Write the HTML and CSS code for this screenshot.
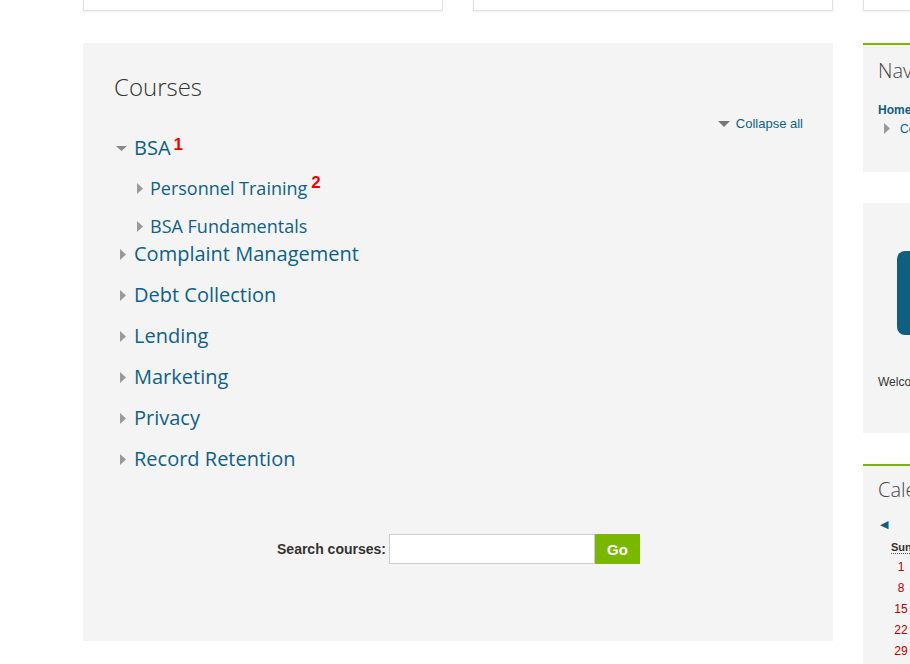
FILE: index.html
```html
<!DOCTYPE html>
<html lang="en">
<head>
  <meta charset="UTF-8" />
  <title>Courses</title>
  <link rel="stylesheet" href="styles.css">
</head>
<body>
  <div class="page">
    <div class="top-row">
      <div class="card"></div>
      <div class="card"></div>
      <div class="card"></div>
    </div>

    <div class="layout">
      <div class="main">
        <h2 class="main-title">Courses</h2>
        <div class="collapse-row">
          <a href="#" class="collapse-all">
            <svg class="tri-down-sm" width="12" height="6" viewBox="0 0 12 6"><path d="M0 0h12L6 6z" fill="#777"/></svg>
            Collapse all
          </a>
        </div>

        <div class="cat-tree">
          <div class="cat expanded">
            <div class="cat-name">
              <svg class="icon" width="20" height="28" viewBox="0 0 20 28"><path d="M2 12h11l-5.5 5z" fill="#8a8a8a"/></svg>
              <a href="#">BSA</a><span class="mark">1</span>
            </div>
            <div class="cat-children">
              <div class="subcat">
                <svg class="icon" width="16" height="28" viewBox="0 0 16 28"><path d="M3 9v11l6-5.5z" fill="#9a9a9a"/></svg>
                <a href="#">Personnel Training</a><span class="mark">2</span>
              </div>
              <div class="subcat">
                <svg class="icon" width="16" height="28" viewBox="0 0 16 28"><path d="M3 9v11l6-5.5z" fill="#9a9a9a"/></svg>
                <a href="#">BSA Fundamentals</a>
              </div>
            </div>
          </div>
          <div class="cat">
            <div class="cat-name">
              <svg class="icon" width="20" height="28" viewBox="0 0 20 28"><path d="M6 9v11l6-5.5z" fill="#9a9a9a"/></svg>
              <a href="#">Complaint Management</a>
            </div>
          </div>
          <div class="cat">
            <div class="cat-name">
              <svg class="icon" width="20" height="28" viewBox="0 0 20 28"><path d="M6 9v11l6-5.5z" fill="#9a9a9a"/></svg>
              <a href="#">Debt Collection</a>
            </div>
          </div>
          <div class="cat">
            <div class="cat-name">
              <svg class="icon" width="20" height="28" viewBox="0 0 20 28"><path d="M6 9v11l6-5.5z" fill="#9a9a9a"/></svg>
              <a href="#">Lending</a>
            </div>
          </div>
          <div class="cat">
            <div class="cat-name">
              <svg class="icon" width="20" height="28" viewBox="0 0 20 28"><path d="M6 9v11l6-5.5z" fill="#9a9a9a"/></svg>
              <a href="#">Marketing</a>
            </div>
          </div>
          <div class="cat">
            <div class="cat-name">
              <svg class="icon" width="20" height="28" viewBox="0 0 20 28"><path d="M6 9v11l6-5.5z" fill="#9a9a9a"/></svg>
              <a href="#">Privacy</a>
            </div>
          </div>
          <div class="cat">
            <div class="cat-name">
              <svg class="icon" width="20" height="28" viewBox="0 0 20 28"><path d="M6 9v11l6-5.5z" fill="#9a9a9a"/></svg>
              <a href="#">Record Retention</a>
            </div>
          </div>
        </div>

        <form class="search-form" onsubmit="return false">
          <label for="shortsearchbox">Search courses:</label>
          <input type="text" id="shortsearchbox" />
          <button type="submit">Go</button>
        </form>
      </div>

      <div class="side">
        <div class="block block-green nav-block">
          <h3 class="block-title">Navigation</h3>
          <div class="nav-home"><a href="#">Home</a></div>
          <div class="nav-item">
            <svg width="8" height="12" viewBox="0 0 8 12"><path d="M1 0v11l6-5.5z" fill="#9a9a9a"/></svg>
            <a href="#">Courses</a>
          </div>
        </div>

        <div class="block welcome-block">
          <div class="welcome-img"></div>
          <p class="welcome-text">Welcome</p>
        </div>

        <div class="block block-green cal-block">
          <h3 class="block-title">Calendar</h3>
          <div class="cal-prev">&#9664;</div>
          <div class="cal-head"><abbr>Sun</abbr></div>
          <div class="cal-day">1</div>
          <div class="cal-day">8</div>
          <div class="cal-day">15</div>
          <div class="cal-day">22</div>
          <div class="cal-day">29</div>
        </div>
      </div>
    </div>
  </div>
</body>
</html>
```

FILE: styles.css
```css
html, body {
  overflow: hidden;
}
body {
  margin: 0;
  background: #fff;
  font-family: "Liberation Sans", Arial, sans-serif;
  color: #333;
}
a {
  color: #0f6185;
  text-decoration: none;
}

.page {
  padding-left: 83px;
  width: 1200px;
}

.top-row {
  display: grid;
  grid-template-columns: 360px 360px 220px;
  gap: 30px;
  margin-bottom: 32px;
}
.card {
  height: 10px;
  background: #fff;
  border: 1px solid #e2e2e2;
  border-top: none;
  box-shadow: 0 1px 2px rgba(0,0,0,0.08);
}

.layout {
  display: grid;
  grid-template-columns: 750px 220px;
  gap: 30px;
  align-items: start;
}

.main {
  background: #f4f4f4;
  height: 598px;
  box-sizing: border-box;
  padding: 29px 30px 0 31px;
}
.main-title {
  margin: 0;
  font-family: "Open Sans", sans-serif;
  font-weight: 300;
  font-size: 24px;
  line-height: 29px;
  color: #333;
}
.collapse-row {
  text-align: right;
  margin-top: 13px;
  height: 20px;
  line-height: 20px;
  font-size: 13px;
}
.collapse-all .tri-down-sm {
  vertical-align: 1px;
  margin-right: 2px;
}

.cat-tree {
  margin-top: 0;
}
.cat {
  margin-bottom: 13px;
}
.cat.expanded {
  margin-bottom: 0;
}
.cat-name,
.subcat {
  display: flex;
  align-items: flex-start;
  font-family: "Open Sans", sans-serif;
  line-height: 28px;
  height: 28px;
}
.cat-name {
  font-size: 20px;
}
.cat-name .icon,
.subcat .icon {
  flex: none;
}
.cat-children {
  margin: 12px 0 0 20px;
  display: flex;
  flex-direction: column;
  gap: 10px;
}
.subcat {
  font-size: 18px;
}
.mark {
  color: #e00;
  font-family: "Liberation Sans", Arial, sans-serif;
  font-weight: bold;
  font-size: 17px;
  line-height: 17px;
  margin-left: 3px;
  margin-top: 2px;
}
.subcat .mark {
  margin-left: 4px;
  margin-top: 0;
}

.search-form {
  margin-top: 61px;
  display: flex;
  justify-content: center;
  align-items: center;
}
.search-form label {
  font-size: 14px;
  font-weight: bold;
  color: #333;
  margin-right: 3px;
}
.search-form input {
  width: 206px;
  height: 30px;
  box-sizing: border-box;
  border: 1px solid #ccc;
  background: #fff;
  margin: 0;
  padding: 4px 6px;
  font-family: inherit;
}
.search-form button {
  width: 45px;
  height: 30px;
  border: none;
  background: #7ab800;
  color: #fff;
  font-family: inherit;
  font-weight: bold;
  font-size: 15px;
  padding: 0;
  margin: 0;
}

.side {
  display: flex;
  flex-direction: column;
  gap: 31px;
}
.block {
  background: #f4f4f4;
  padding: 0 15px;
  box-sizing: border-box;
}
.block-green {
  border-top: 2px solid #7ab800;
}
.block-title {
  margin: 0;
  font-family: "Open Sans", sans-serif;
  font-weight: 300;
  font-size: 20px;
  color: #444;
  white-space: nowrap;
}
.nav-block {
  height: 129px;
  padding-top: 12px;
}
.nav-home {
  margin-top: 19px;
  font-size: 12px;
  font-weight: bold;
}
.nav-home a {
  color: #0f5f80;
}
.nav-item {
  font-size: 12px;
  display: flex;
  align-items: center;
  gap: 9px;
  padding-left: 5px;
  margin-top: 5px;
}

.welcome-block {
  height: 230px;
  padding-top: 48px;
}
.welcome-img {
  margin-left: 19px;
  width: 160px;
  height: 84px;
  background: #0f5f80;
  border-radius: 8px;
}
.welcome-text {
  margin: 40px 0 0;
  font-size: 12px;
}

.cal-block {
  height: 260px;
  padding-top: 10px;
}
.cal-prev {
  margin-top: 15px;
  color: #0f5f80;
  font-size: 11px;
  padding-left: 2px;
}
.cal-head {
  margin-top: 10px;
  width: 30px;
  margin-left: 13px;
  font-size: 11px;
  font-weight: bold;
  color: #333;
}
.cal-head abbr {
  text-decoration: none;
  border-bottom: 1px dotted #555;
}
.cal-day {
  width: 18px;
  margin-left: 14px;
  text-align: center;
  font-size: 12px;
  line-height: 21px;
  color: #b30000;
}
.cal-head + .cal-day {
  margin-top: 4px;
}
```
